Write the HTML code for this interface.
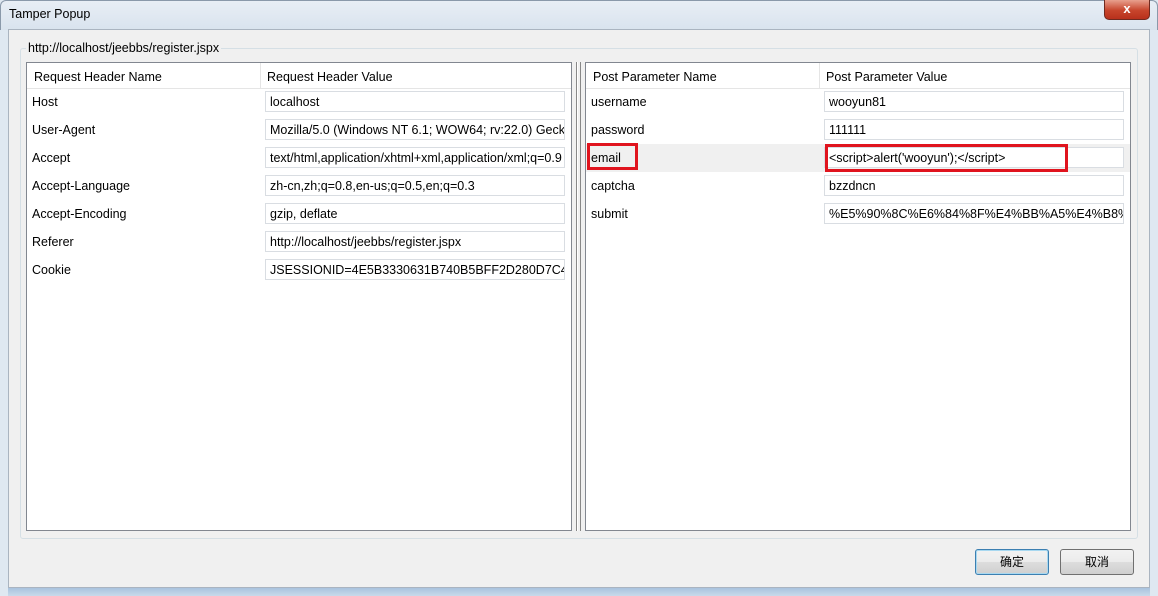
<!DOCTYPE html>
<html><head><meta charset="utf-8"><style>
*{margin:0;padding:0;box-sizing:border-box}
body{width:1158px;height:596px;overflow:hidden;position:relative;background:#dfe8f1;font-family:"Liberation Sans","Noto Sans CJK SC",sans-serif;font-size:12.5px;color:#000}
.a{position:absolute}
.title{left:0;top:0;width:1158px;height:30px;background:linear-gradient(#e8eef5,#d9e3ee);border:1px solid #8a99aa;border-bottom:none;border-radius:6px 6px 0 0}
.client{left:8px;top:29px;width:1142px;height:559px;background:#f0f0f0;border:1px solid #aab4c0}
.group{left:20px;top:48px;width:1118px;height:491px;border:1px solid #d5dfe5;border-radius:3px}
.tbl{background:#fff;border:1px solid #828790}
.hdr{height:26px;background:#fff;border-bottom:1px solid #e5e5e5}
.inp{height:21px;border:1px solid #d9dde2;background:#fff;overflow:hidden;white-space:nowrap;padding:3px 4px 0 4px;line-height:15px}
.lbl{line-height:16px}
.btn{height:26px;border:1px solid #707070;border-radius:3px;background:linear-gradient(#f2f2f2,#ebebeb 50%,#dddddd 51%,#cfcfcf);text-align:center;line-height:24px;font-size:12px}
</style></head><body>
<div class="a title"></div>
<div class="a" style="left:9px;top:7px;font-size:12.5px">Tamper Popup</div>
<div class="a" style="left:1104px;top:0;width:46px;height:20px;background:linear-gradient(#e8a08e,#c7452c 55%,#b8301c);border:1px solid #6f2a20;border-top:none;border-radius:0 0 5px 5px;color:#fff;text-align:center;font-weight:bold;font-size:13px;line-height:18px">x</div>
<div class="a client"></div>
<div class="a group"></div>
<div class="a" style="left:26px;top:41px;background:#f0f0f0;padding:0 2px">http://localhost/jeebbs/register.jspx</div>

<div class="a tbl" style="left:26px;top:62px;width:546px;height:469px"></div>
<div class="a hdr" style="left:27px;top:63px;width:544px"></div>
<div class="a" style="left:260px;top:63px;width:1px;height:26px;background:#e5e5e5"></div>
<div class="a lbl" style="left:34px;top:69px">Request Header Name</div>
<div class="a lbl" style="left:267px;top:69px">Request Header Value</div>

<div class="a" style="left:576px;top:62px;width:2px;height:469px;border-left:1px solid #888;border-right:1px solid #fff"></div>
<div class="a" style="left:580px;top:62px;width:1px;height:469px;background:#888"></div>

<div class="a tbl" style="left:585px;top:62px;width:546px;height:469px"></div>
<div class="a hdr" style="left:586px;top:63px;width:544px"></div>
<div class="a" style="left:819px;top:63px;width:1px;height:26px;background:#e5e5e5"></div>
<div class="a lbl" style="left:593px;top:69px">Post Parameter Name</div>
<div class="a lbl" style="left:826px;top:69px">Post Parameter Value</div>
<div class="a" style="left:586px;top:144px;width:544px;height:28px;background:#f0f0f0"></div>

<div class="a lbl" style="left:32px;top:94px">Host</div>
<div class="a inp" style="left:265px;top:91px;width:300px">localhost</div>
<div class="a lbl" style="left:32px;top:122px">User-Agent</div>
<div class="a inp" style="left:265px;top:119px;width:300px">Mozilla/5.0 (Windows NT 6.1; WOW64; rv:22.0) Gecko/20100101 Firefox/22.0</div>
<div class="a lbl" style="left:32px;top:150px">Accept</div>
<div class="a inp" style="left:265px;top:147px;width:300px">text/html,application/xhtml+xml,application/xml;q=0.9</div>
<div class="a lbl" style="left:32px;top:178px">Accept-Language</div>
<div class="a inp" style="left:265px;top:175px;width:300px">zh-cn,zh;q=0.8,en-us;q=0.5,en;q=0.3</div>
<div class="a lbl" style="left:32px;top:206px">Accept-Encoding</div>
<div class="a inp" style="left:265px;top:203px;width:300px">gzip, deflate</div>
<div class="a lbl" style="left:32px;top:234px">Referer</div>
<div class="a inp" style="left:265px;top:231px;width:300px">http://localhost/jeebbs/register.jspx</div>
<div class="a lbl" style="left:32px;top:262px">Cookie</div>
<div class="a inp" style="left:265px;top:259px;width:300px">JSESSIONID=4E5B3330631B740B5BFF2D280D7C4D</div>

<div class="a lbl" style="left:591px;top:94px">username</div>
<div class="a inp" style="left:824px;top:91px;width:300px">wooyun81</div>
<div class="a lbl" style="left:591px;top:122px">password</div>
<div class="a inp" style="left:824px;top:119px;width:300px">111111</div>
<div class="a lbl" style="left:591px;top:150px">email</div>
<div class="a inp" style="left:824px;top:147px;width:300px">&lt;script&gt;alert('wooyun');&lt;/script&gt;</div>
<div class="a lbl" style="left:591px;top:178px">captcha</div>
<div class="a inp" style="left:824px;top:175px;width:300px">bzzdncn</div>
<div class="a lbl" style="left:591px;top:206px">submit</div>
<div class="a inp" style="left:824px;top:203px;width:300px">%E5%90%8C%E6%84%8F%E4%BB%A5%E4%B8%8B</div>

<div class="a" style="left:587px;top:143px;width:51px;height:27px;border:3px solid #e0141e"></div>
<div class="a" style="left:825px;top:144px;width:243px;height:28px;border:3px solid #e0141e"></div>

<div class="a btn" style="left:975px;top:549px;width:74px;border-color:#3c7fb1;box-shadow:inset 0 0 0 1px #a8d8f0">确定</div>
<div class="a btn" style="left:1060px;top:549px;width:74px">取消</div>
<div class="a" style="left:8px;top:588px;width:1142px;height:8px;background:linear-gradient(#a9c3de,#c9daea)"></div>
</body></html>
